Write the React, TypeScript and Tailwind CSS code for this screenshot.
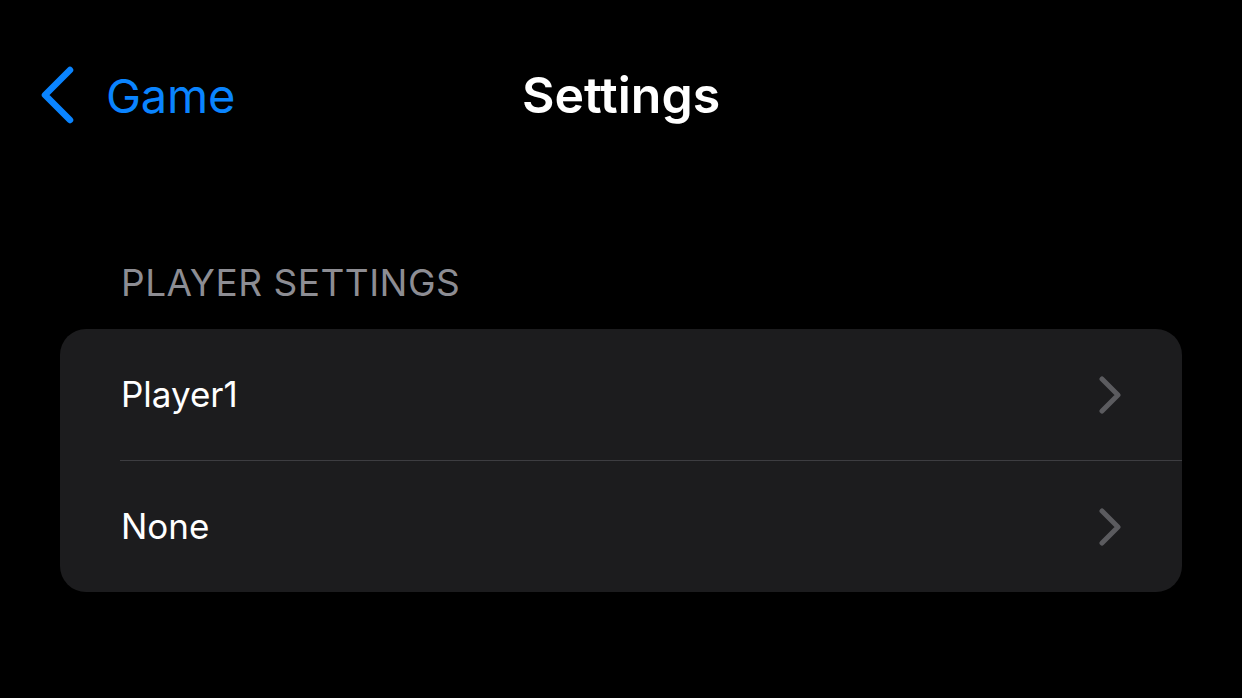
import React from 'react';

type Row = { id: string; label: string };

const rows: Row[] = [
  { id: 'p1', label: 'Player1' },
  { id: 'p2', label: 'None' },
];

const BackChevron = () => (
  <svg width="34" height="58" viewBox="0 0 34 58" fill="none">
    <path d="M30 4 L5 29 L30 54" stroke="#0A84FF" strokeWidth="6.5" strokeLinecap="round" strokeLinejoin="round" />
  </svg>
);

const RowChevron = () => (
  <svg width="22" height="38" viewBox="0 0 22 38" fill="none">
    <path d="M3 3 L19 19 L3 35" stroke="#5B5B5F" strokeWidth="5" strokeLinecap="round" strokeLinejoin="round" />
  </svg>
);

export default function App() {
  return (
    <div className="min-h-screen w-full bg-black font-['Inter','Noto_Sans',sans-serif] antialiased">
      <header className="grid h-[90px] grid-cols-[1fr_auto_1fr] items-center px-[40px] pt-[50px] box-content">
        <button className="flex items-center gap-[32px] text-[#0A84FF]">
          <BackChevron />
          <span className="text-[47px] leading-none tracking-[-0.2px]">Game</span>
        </button>
        <h1 className="text-[50px] font-semibold leading-none text-white">Settings</h1>
        <div />
      </header>

      <section className="mt-[124px] px-[60px]">
        <p className="pl-[61px] text-[37px] leading-none tracking-[0.5px] text-[#8D8D93]">PLAYER SETTINGS</p>
        <div className="mt-[28px] overflow-hidden rounded-[26px] bg-[#1C1C1E]">
          {rows.map((row, i) => (
            <div key={row.id}>
              {i > 0 && <div className="ml-[60px] h-px bg-[#3D3D41]" />}
              <div className="flex h-[131px] items-center justify-between pl-[61px] pr-[61px]">
                <span className="text-[35px] leading-none text-white">{row.label}</span>
                <RowChevron />
              </div>
            </div>
          ))}
        </div>
      </section>
    </div>
  );
}
